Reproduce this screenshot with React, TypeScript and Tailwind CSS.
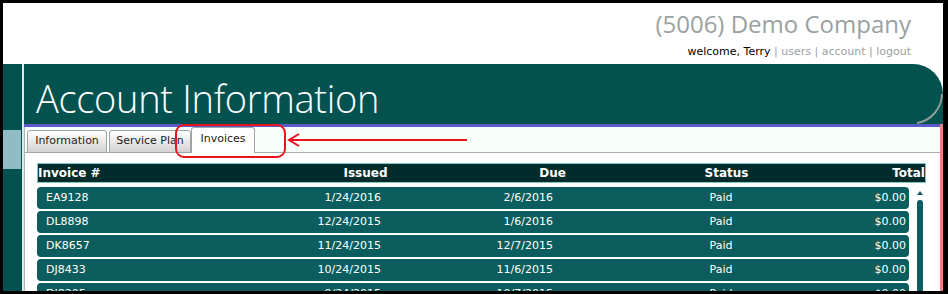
import React from "react";

const rows = [
  { id: "EA9128", issued: "1/24/2016", due: "2/6/2016", status: "Paid", total: "$0.00" },
  { id: "DL8898", issued: "12/24/2015", due: "1/6/2016", status: "Paid", total: "$0.00" },
  { id: "DK8657", issued: "11/24/2015", due: "12/7/2015", status: "Paid", total: "$0.00" },
  { id: "DJ8433", issued: "10/24/2015", due: "11/6/2015", status: "Paid", total: "$0.00" },
  { id: "DI8205", issued: "9/24/2015", due: "10/7/2015", status: "Paid", total: "$0.00" },
];

const verdana = { fontFamily: '"DejaVu Sans", Verdana, sans-serif' };

export default function App() {
  return (
    <div className="w-[948px] h-[294px] bg-black pt-[3px] pl-[3px] pr-[5px] pb-[3px]">
      <div className="relative w-full h-full bg-white overflow-hidden flex flex-col">
        {/* top area */}
        <div className="h-[61px] shrink-0 flex flex-col items-end pr-[32px] pt-[7px]">
          <div
            className="text-[24px] leading-[28px] text-[#9aa1a1]"
            style={{ fontFamily: '"Open Sans", sans-serif' }}
          >
            (5006) Demo Company
          </div>
          <div className="text-[11px] leading-[14px] mt-[7px]" style={verdana}>
            <span className="text-black">welcome, Terry</span>
            <span className="text-[#9aa1a1]"> | users | account | logout</span>
          </div>
        </div>

        <div className="flex flex-1 min-h-0">
          {/* left strip */}
          <div className="w-[19px] shrink-0 bg-[#03524f] flex flex-col">
            <div className="h-[66px]" />
            <div className="h-[39px] bg-[#8fbcc5] mr-[1px]" />
          </div>
          <div className="w-[2px] shrink-0 bg-[#dfe8e8]" />

          {/* main */}
          <div className="flex-1 min-w-0 flex flex-col">
            <div className="relative h-[60px] shrink-0 bg-[#03524f] rounded-tr-[30px] pl-[12px] pt-[12px]">
              <div
                className="text-white text-[38px] leading-[44px] font-light tracking-[-0.3px]"
                style={{ fontFamily: '"Open Sans", sans-serif' }}
              >
                Account Information
              </div>
              <svg className="absolute right-0 top-0" width="40" height="60" viewBox="0 0 40 60">
                <path d="M 39 30 A 30 30 0 0 1 14 59" fill="none" stroke="#8f9a99" strokeWidth="2" />
              </svg>
            </div>
            <div className="flex-1 min-h-0 flex flex-col border-r-[3px] border-[#f08080]">
              <div className="h-[3px] shrink-0 bg-[#5a5ac8]" />
              <div className="flex-1 min-h-0 flex flex-col border-l border-[#a9b6b6]">
                {/* tabs */}
                <div className="h-[26px] shrink-0 bg-[#f9fff9] border-b border-[#a7aeb3] flex items-end pl-[2px]" style={verdana}>
                  <div className="w-[80px] h-[23px] mb-[-1px] border border-[#a0a4a8] rounded-t-[3px] bg-gradient-to-b from-white to-[#d3d3d3] flex items-center justify-center text-[11px] text-[#222]">
                    Information
                  </div>
                  <div className="w-[82px] h-[23px] ml-[2px] mb-[-1px] border border-[#a0a4a8] rounded-t-[3px] bg-gradient-to-b from-white to-[#d3d3d3] flex items-center justify-center text-[11px] text-[#222]">
                    Service Plan
                  </div>
                  <div className="w-[64px] h-[26px] mb-[-1px] border border-b-0 border-[#a0a4a8] rounded-t-[3px] bg-white flex justify-center pt-[3px] text-[11px] text-[#222]">
                    Invoices
                  </div>
                </div>

                {/* content */}
                <div className="flex-1 min-h-0 bg-white pt-[10px] pl-[12px]" style={verdana}>
                  <div className="w-[889px] h-[20px] bg-[#022b2b] border border-[#7cc6c6] flex items-center text-[12px] font-bold text-white">
                    <div className="w-[212px]">Invoice #</div>
                    <div className="w-[231px] text-center">Issued</div>
                    <div className="w-[143px] text-center">Due</div>
                    <div className="w-[205px] text-center">Status</div>
                    <div className="flex-1 text-right">Total</div>
                  </div>
                  <div className="flex mt-[4px]">
                    <div className="w-[872px] flex flex-col gap-[2px]">
                      {rows.map((r) => (
                        <div
                          key={r.id}
                          className="h-[22px] shrink-0 rounded-[4px] bg-[#0c5d5d] flex items-center text-[11px] text-white"
                        >
                          <div className="w-[213px] pl-[9px]">{r.id}</div>
                          <div className="w-[131px] text-right">{r.issued}</div>
                          <div className="w-[172px] text-right">{r.due}</div>
                          <div className="w-[256px] pl-[80px] text-center">{r.status}</div>
                          <div className="flex-1 text-right pr-[3px]">{r.total}</div>
                        </div>
                      ))}
                    </div>
                    <div className="ml-[8px] w-[6px] flex flex-col items-center pt-[4px]">
                      <svg width="6" height="5" viewBox="0 0 6 5">
                        <path d="M3 0 L6 4 L0 4 Z" fill="#0c5d5d" />
                      </svg>
                      <div className="w-[6px] h-[120px] mt-[4px] rounded-t-[3px] bg-[#0c5d5d]" />
                    </div>
                  </div>
                </div>
              </div>
            </div>
          </div>
        </div>

        {/* annotation overlay */}
        <svg className="absolute left-0 top-0 pointer-events-none" width="940" height="288" viewBox="0 0 940 288">
          <rect x="173" y="122" width="109" height="32" rx="8" ry="8" fill="none" stroke="#e8141c" strokeWidth="2" />
          <line x1="287" y1="137" x2="464" y2="137" stroke="#e8141c" strokeWidth="2" />
          <path d="M 296 131 L 286 137 L 296 143" fill="none" stroke="#e8141c" strokeWidth="2" />
        </svg>
      </div>
    </div>
  );
}
